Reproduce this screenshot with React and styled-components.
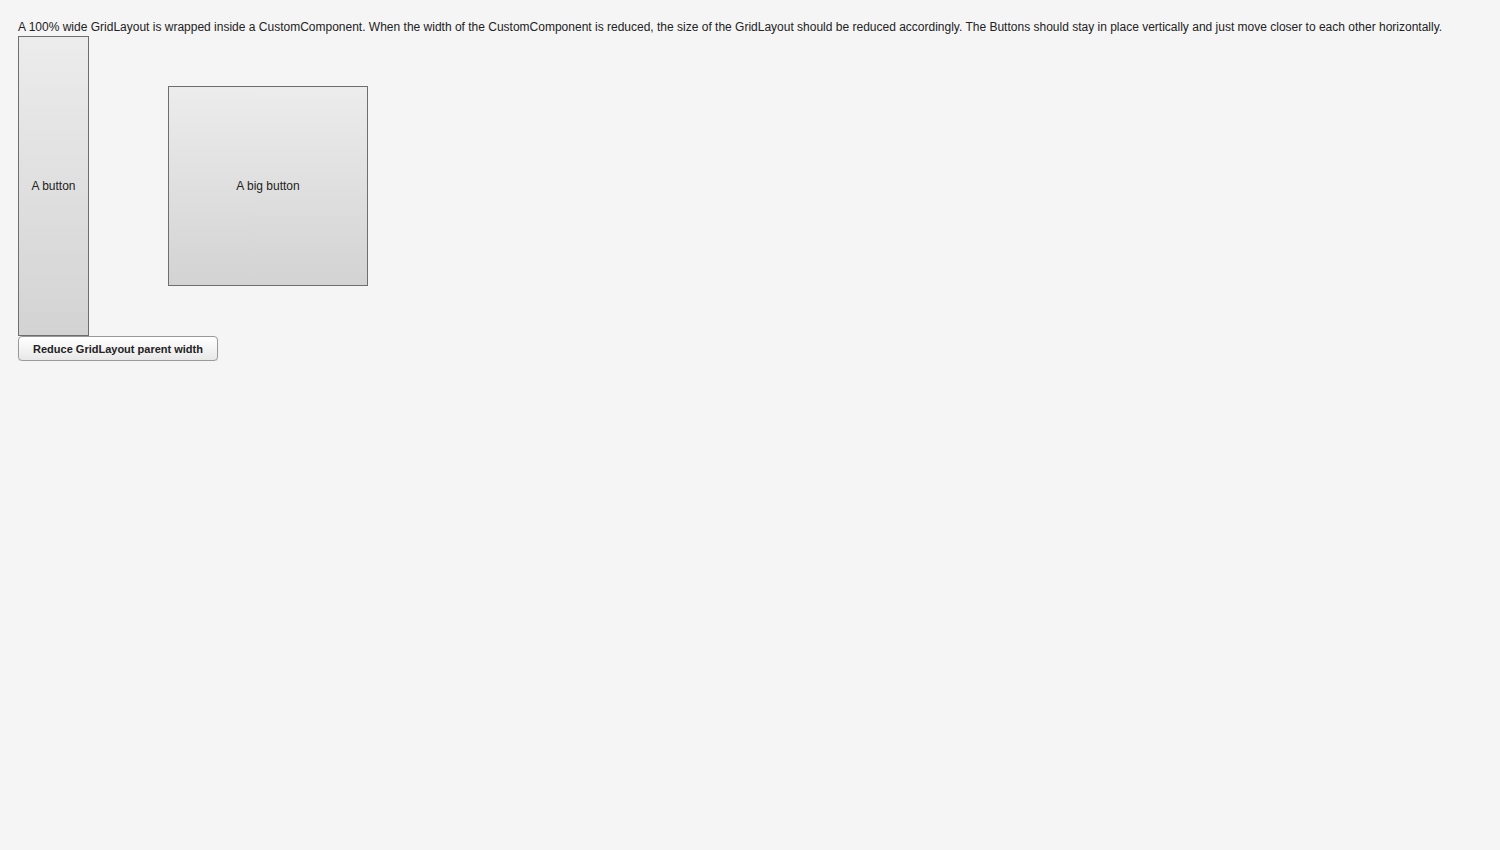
import React from "react";
import styled, { createGlobalStyle } from "styled-components";

const GlobalStyle = createGlobalStyle`
  html, body {
    margin: 0;
    padding: 0;
    background: #f5f5f5;
    font-family: "Liberation Sans", Arial, sans-serif;
    color: #222;
  }
`;

const Page = styled.div`
  padding: 18px 18px 0 18px;
`;

const Caption = styled.div`
  font-size: 12px;
  line-height: 18px;
  white-space: nowrap;
`;

const Grid = styled.div`
  display: grid;
  grid-template-columns: 150px 200px;
  grid-template-rows: 300px;
  align-items: center;
  width: 350px;
`;

const Cell = styled.div`
  display: flex;
  align-items: center;
  height: 100%;
`;

const GridButton = styled.button`
  box-sizing: border-box;
  width: ${(p) => p.$w}px;
  height: ${(p) => p.$h}px;
  padding: 0;
  margin: 0;
  border: 1px solid #6e6e6e;
  background: linear-gradient(to bottom, #ececec, #d3d3d3);
  font-family: "Liberation Sans", Arial, sans-serif;
  font-size: 12px;
  color: #222;
  cursor: pointer;
`;

const ReduceButton = styled.button`
  box-sizing: border-box;
  width: 200px;
  height: 25px;
  margin: 0;
  padding: 0;
  border: 1px solid #9a9a9a;
  border-radius: 4px;
  background: linear-gradient(to bottom, #ffffff, #e8e8e8);
  box-shadow: 0 1px 1px rgba(0, 0, 0, 0.12);
  font-family: "Liberation Sans", Arial, sans-serif;
  font-size: 11px;
  font-weight: bold;
  color: #222;
  cursor: pointer;
`;

export default function App() {
  return (
    <>
      <GlobalStyle />
      <Page>
        <Caption>
          A 100% wide GridLayout is wrapped inside a CustomComponent. When the width of the CustomComponent is reduced, the size of the GridLayout should be reduced accordingly. The Buttons should stay in place vertically and just move closer to each other horizontally.
        </Caption>
        <Grid>
          <Cell>
            <GridButton $w={71} $h={300}>A button</GridButton>
          </Cell>
          <Cell>
            <GridButton $w={200} $h={200}>A big button</GridButton>
          </Cell>
        </Grid>
        <ReduceButton>Reduce GridLayout parent width</ReduceButton>
      </Page>
    </>
  );
}
